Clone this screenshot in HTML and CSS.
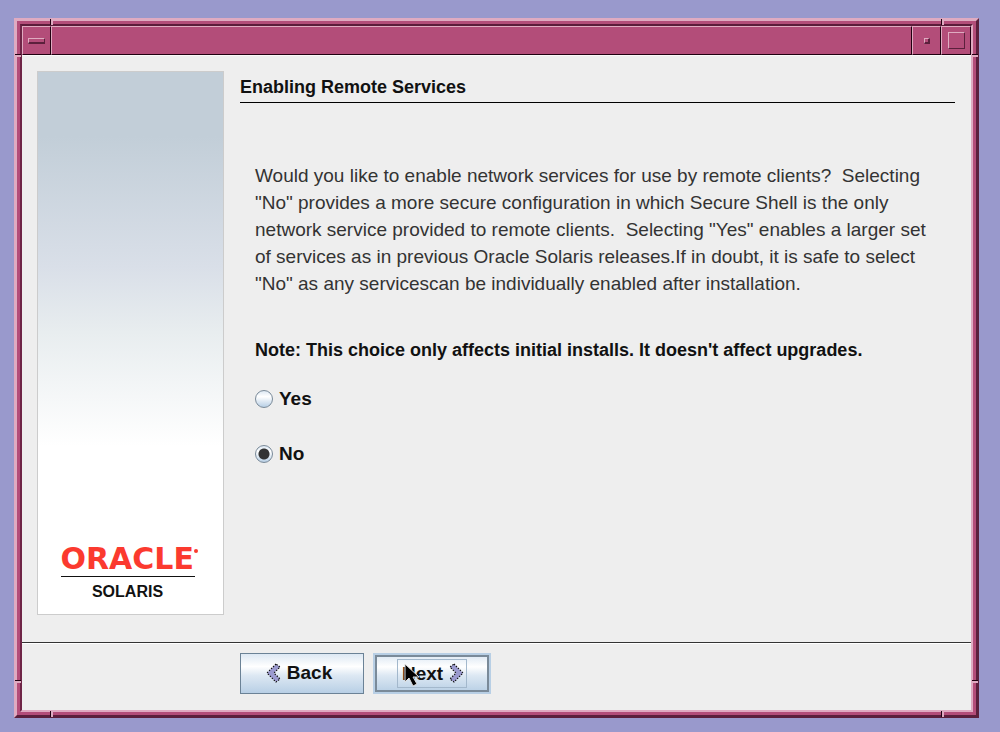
FILE: index.html
```
<!DOCTYPE html>
<html lang="en">
<head>
<meta charset="utf-8">
<title>Enabling Remote Services</title>
<link rel="stylesheet" href="styles.css">
</head>
<body>
<div class="window">
  <i class="notch notch-v top near"></i><i class="notch notch-v top far"></i>
  <i class="notch notch-v bottom near"></i><i class="notch notch-v bottom far"></i>
  <i class="notch notch-h left upper"></i><i class="notch notch-h right upper"></i>
  <i class="notch notch-h left lower"></i><i class="notch notch-h right lower"></i>
  <div class="frame">
    <div class="client">
      <header class="titlebar">
        <button class="wm-button" type="button" aria-label="Window menu"><span class="glyph glyph-menu"></span></button>
        <div class="caption"></div>
        <button class="wm-button" type="button" aria-label="Minimize"><span class="glyph glyph-min"></span></button>
        <button class="wm-button" type="button" aria-label="Maximize"><span class="glyph glyph-max"></span></button>
      </header>
      <main class="page">
        <aside class="banner">
          <div class="logo">
            <div class="brand">ORACLE<svg class="dot" width="4" height="4" viewBox="0 0 4 4" aria-hidden="true"><circle cx="2" cy="2" r="2" fill="#fb3a2f"/></svg></div>
            <div class="product">SOLARIS</div>
          </div>
        </aside>
        <section class="content">
          <h1 class="heading">Enabling Remote Services</h1>
          <div class="details">
            <p class="intro">Would you like to enable network services for use by remote clients?&nbsp; Selecting<br>"No" provides a more secure configuration in which Secure Shell is the only<br>network service provided to remote clients.&nbsp; Selecting "Yes" enables a larger set<br>of services as in previous Oracle Solaris releases.If in doubt, it is safe to select<br>"No" as any servicescan be individually enabled after installation.</p>
            <p class="note">Note: This choice only affects initial installs. It doesn't affect upgrades.</p>
            <div class="choices">
              <label class="choice"><input class="radio" type="radio" name="remote" value="yes">Yes</label>
              <label class="choice"><input class="radio" type="radio" name="remote" value="no" checked>No</label>
            </div>
          </div>
        </section>
      </main>
      <footer class="actions">
        <button class="button" type="button">
          <svg width="15" height="20" viewBox="0 0 15 20" aria-hidden="true"><path d="M10 1 L1 10 L10 19 L14 16 L8 10 L14 4 Z" fill="#9c9bd0"/><path d="M10 1 L1 10 L10 19 L14 16 L8 10 L14 4 Z" fill="none" stroke="#111" stroke-width="1.2" stroke-dasharray="1.4 1.4"/></svg>
          <span>Back</span>
        </button>
        <button class="button button-default" type="button">
          <span class="focus"><span>Next</span>
          <svg width="15" height="20" viewBox="0 0 15 20" aria-hidden="true"><path d="M5 1 L14 10 L5 19 L1 16 L7 10 L1 4 Z" fill="#9c9bd0"/><path d="M5 1 L14 10 L5 19 L1 16 L7 10 L1 4 Z" fill="none" stroke="#111" stroke-width="1.2" stroke-dasharray="1.4 1.4"/></svg></span>
          <svg class="cursor" width="16" height="26" viewBox="0 0 16 26" aria-hidden="true"><path d="M1 1 V19 L5 15 L9 23 L13 21 L9 14 H15 Z" fill="#000" stroke="#ddd" stroke-width="1"/></svg>
        </button>
      </footer>
    </div>
  </div>
</div>
</body>
</html>
```
FILE: styles.css
```
* { box-sizing: border-box; }

body {
  margin: 0;
  min-height: 100vh;
  display: flex;
  padding: 18px 21px 14px 14px;
  background: #9999cc;
  color: #111;
  font: 19px/27px "Liberation Sans", Arial, sans-serif;
}

h1, p { margin: 0; }

.window {
  position: relative;
  flex: 1;
  display: flex;
  border: 3px solid;
  border-color: #dfabc1 #5b203c #5b203c #dfabc1;
}

.frame {
  flex: 1;
  display: flex;
  border: 3px solid #b34d79;
}

.client {
  flex: 1;
  display: flex;
  flex-direction: column;
  border: 2px solid;
  border-color: #5b1c3a #dfabc1 #dfabc1 #6e2446;
  background: #eeeeee;
}

.notch { position: absolute; background: #dfabc1; }
.notch-v { width: 3px; height: 6px; border-left: 1px solid #200010; }
.notch-h { width: 6px; height: 3px; border-top: 1px solid #200010; }
.top { top: -2px; }
.bottom { bottom: -2px; }
.left { left: -2px; }
.right { right: -2px; }
.near { left: 33px; }
.far { right: 32px; }
.upper { top: 33px; }
.lower { bottom: 32px; }

.titlebar {
  display: grid;
  grid-template-columns: 29px 1fr 29px 30px;
  height: 30px;
  border-bottom: 1px solid #fafafa;
}

.wm-button, .caption {
  display: flex;
  align-items: center;
  justify-content: center;
  padding: 0;
  border: 1px solid;
  border-color: #dfabc1 #200010 #200010 #dfabc1;
  background: #b34d79;
}

.glyph {
  border: 1px solid;
  border-color: #dfabc1 #5b203c #5b203c #dfabc1;
}
.glyph-menu { width: 17px; height: 6px; border-bottom-width: 2px; }
.glyph-min { width: 6px; height: 6px; border-right-width: 2px; border-bottom-width: 2px; }
.glyph-max { width: 17px; height: 17px; }

.page {
  flex: 1;
  display: flex;
  gap: 16px;
  padding: 15px 16px 27px 15px;
}

.banner {
  width: 187px;
  display: flex;
  align-items: flex-end;
  justify-content: center;
  padding-bottom: 9px;
  border: 1px solid #cccccc;
  background: linear-gradient(#c2ced8, #c2ced8 12%, #d9dfe8 36%, #e8edef 48%, #ffffff 69%) border-box;
}

.logo { width: 140px; }

.brand {
  display: flex;
  align-items: flex-start;
  margin-right: 6px;
  border-bottom: 1px solid #111;
  color: #fb3a2f;
  font: bold 30px/34px "DejaVu Sans", sans-serif;
}
.dot { margin-top: 7px; flex: none; }

.product {
  margin-right: 6px;
  padding-top: 2px;
  font: bold 16px/26px "Liberation Sans", Arial, sans-serif;
  text-align: center;
}

.content { flex: 1; }

.heading {
  height: 32px;
  border-bottom: 1px solid #000;
  font-size: 18px;
  line-height: 32px;
}

.details { padding: 59px 0 0 15px; }
.intro { color: #333; white-space: nowrap; }

.note {
  padding-top: 40px;
  font-size: 18px;
  font-weight: bold;
  white-space: nowrap;
}

.choices {
  display: flex;
  flex-direction: column;
  align-items: flex-start;
  gap: 28px;
  padding-top: 21px;
}

.choice {
  display: flex;
  align-items: center;
  gap: 6px;
  font-weight: bold;
}

.radio {
  appearance: none;
  width: 18px;
  height: 18px;
  margin: 0;
  border: 1px solid #7a8a99;
  border-radius: 50%;
  background: linear-gradient(#dde8f3, #ffffff 35%, #b8cfe5);
}
.radio:checked {
  background: radial-gradient(circle, #333 0 5px, transparent 6px), linear-gradient(#dde8f3, #ffffff 35%, #b8cfe5);
}

.actions {
  display: flex;
  gap: 9px;
  padding: 10px 16px 16px 218px;
  border-top: 1px solid #333;
  box-shadow: inset 0 1px #fff;
}

.button {
  position: relative;
  display: flex;
  align-items: center;
  justify-content: center;
  gap: 6px;
  width: 124px;
  height: 41px;
  padding: 0 6px 2px 0;
  border: 1px solid #6b8296;
  background: linear-gradient(#dde8f3, #ffffff 32%, #dde8f3 55%, #b8cfe5);
  color: #111;
  font: bold 19px/27px "Liberation Sans", Arial, sans-serif;
}

.button-default {
  width: 118px;
  padding: 0 0 1px;
  border: 2px solid #b8cfe5;
  outline: 2px solid #7a8a99;
  outline-offset: -4px;
}

.focus {
  display: flex;
  align-items: center;
  gap: 6px;
  padding: 0 2px 0 4px;
  border: 1px solid #a3b8cc;
}

.cursor { position: absolute; left: 29px; top: 8px; }
```
